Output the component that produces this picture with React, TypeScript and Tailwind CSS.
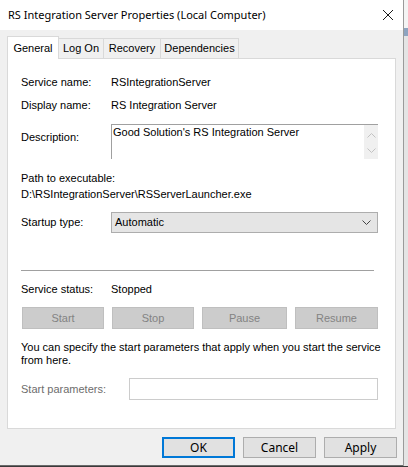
import React from 'react';

const ui = { fontFamily: '"Liberation Sans", Arial, sans-serif' };
const segoe = { fontFamily: '"Noto Sans", "Open Sans", sans-serif' };

function Chevron({ up, className }: { up?: boolean; className?: string }) {
  return (
    <svg width="9" height="6" viewBox="0 0 9 6" className={className}>
      <path
        d={up ? 'M0.5 5.5 L4.5 1.5 L8.5 5.5' : 'M0.5 0.5 L4.5 4.5 L8.5 0.5'}
        fill="none"
        stroke="currentColor"
        strokeWidth="1"
      />
    </svg>
  );
}

function Row({ label, value }: { label: string; value: string }) {
  return (
    <div className="flex h-[23px] items-center">
      <span className="w-[90px]">{label}</span>
      <span>{value}</span>
    </div>
  );
}

function ServiceButton({ label, w }: { label: string; w: string }) {
  return (
    <div
      className={`flex h-[22px] items-center justify-center border border-[#bfbfbf] bg-[#cccccc] text-[#838383] ${w}`}
    >
      {label}
    </div>
  );
}

export default function App() {
  const tabs = ['General', 'Log On', 'Recovery', 'Dependencies'];
  const tabWidths = ['w-[52px]', 'w-[46px]', 'w-[58px]', 'w-[79px]'];

  return (
    <div className="flex h-[467px] w-[408px] flex-col overflow-hidden bg-[#e6e6e6]">
      <div className="flex h-[466px]">
        {/* dialog window */}
        <div className="flex h-full w-[404px] flex-col border-r border-[#9a9a9a] bg-[#f0f0f0]">
          {/* title bar */}
          <div className="flex h-[30px] shrink-0 items-center justify-between bg-white pl-[8px] pr-[9px]" style={segoe}>
            <span className="text-[11px] text-black">RS Integration Server Properties (Local Computer)</span>
            <svg width="12" height="12" viewBox="0 0 12 12">
              <path d="M1 1 L11 11 M11 1 L1 11" stroke="#1a1a1a" strokeWidth="1" />
            </svg>
          </div>

          <div className="flex flex-col px-[7px] pt-[6px] text-[11px] text-black" style={ui}>
            {/* tab strip */}
            <div className="relative z-10 flex h-[22px] items-end">
              {tabs.map((t, i) =>
                i === 0 ? (
                  <div
                    key={t}
                    className={`-mb-px flex h-[23px] items-start justify-center border border-b-0 border-[#d9d9d9] bg-white pt-[3px] ${tabWidths[i]}`}
                  >
                    {t}
                  </div>
                ) : (
                  <div
                    key={t}
                    className={`-ml-px flex h-[20px] items-center justify-center border border-b-0 border-[#d9d9d9] bg-[#f0f0f0] ${tabWidths[i]}`}
                  >
                    {t}
                  </div>
                )
              )}
            </div>

            {/* General page */}
            <div className="flex h-[371px] w-[389px] flex-col border border-[#d9d9d9] bg-white pl-[13px] pt-[12px]">
              <Row label="Service name:" value="RSIntegrationServer" />
              <Row label="Display name:" value="RS Integration Server" />

              <div className="mt-[7px] flex h-[35px]">
                <span className="w-[90px] pt-[5px]">Description:</span>
                <div className="flex w-[267px] border-l border-t border-[#a0a0a0]">
                  <div className="flex-1 pl-px pt-px leading-[13px]">Good Solution's RS Integration Server</div>
                  <div className="flex w-[14px] flex-col items-center justify-between bg-[#f0f0f0] pb-[5px] pt-[7px] text-[#c2c2c2]">
                    <Chevron up />
                    <Chevron />
                  </div>
                </div>
              </div>

              <div className="mt-[12px] leading-[14px]">Path to executable:</div>
              <div className="mt-[2px] leading-[14px]">D:\RSIntegrationServer\RSServerLauncher.exe</div>

              <div className="mt-[11px] flex h-[21px] items-center">
                <span className="w-[90px]">Startup type:</span>
                <div className="flex h-full w-[267px] items-center justify-between border border-[#adadad] bg-[#e5e5e5] pl-[3px] pr-[6px]">
                  <span>Automatic</span>
                  <Chevron className="text-[#444]" />
                </div>
              </div>

              <div className="mt-[37px] h-px w-[353px] bg-[#a0a0a0]" />

              <div className="mt-[11px] flex h-[14px] items-center">
                <span className="w-[90px]">Service status:</span>
                <span>Stopped</span>
              </div>

              <div className="mt-[11px] flex w-[357px] gap-[8px] pl-px">
                <ServiceButton label="Start" w="w-[82px]" />
                <ServiceButton label="Stop" w="w-[82px]" />
                <ServiceButton label="Pause" w="w-[85px]" />
                <ServiceButton label="Resume" w="w-[83px]" />
              </div>

              <p className="mt-[12px] w-[360px] leading-[13px]">
                You can specify the start parameters that apply when you start the service from here.
              </p>

              <div className="mt-[11px] flex h-[22px] items-center">
                <span className="w-[108px] text-[#6d6d6d]">Start parameters:</span>
                <div className="h-full w-[249px] border border-[#cccccc] bg-white" />
              </div>
            </div>
          </div>

          {/* dialog buttons */}
          <div className="mt-[8px] flex gap-[8px] pl-[162px] text-[12px]" style={segoe}>
            <div className="flex h-[21px] w-[73px] items-center justify-center border-2 border-[#0078d7] bg-[#e1e1e1]">OK</div>
            <div className="flex h-[21px] w-[73px] items-center justify-center border border-[#adadad] bg-[#e1e1e1]">Cancel</div>
            <div className="flex h-[21px] w-[73px] items-center justify-center border border-[#adadad] bg-[#e1e1e1]">Apply</div>
          </div>
          <div className="mt-auto h-px bg-[#6a6a6a]" />
        </div>

        {/* sliver of the window behind */}
        <div className="flex w-[4px] flex-col">
          <div className="h-[28px] bg-[#f4f4f4]" />
          <div className="h-[8px] bg-[#8ea4c0]" />
          <div className="flex-1 bg-[#e4e4e4]" />
        </div>
      </div>
      <div className="h-px bg-[#3a3a3a]" />
    </div>
  );
}
